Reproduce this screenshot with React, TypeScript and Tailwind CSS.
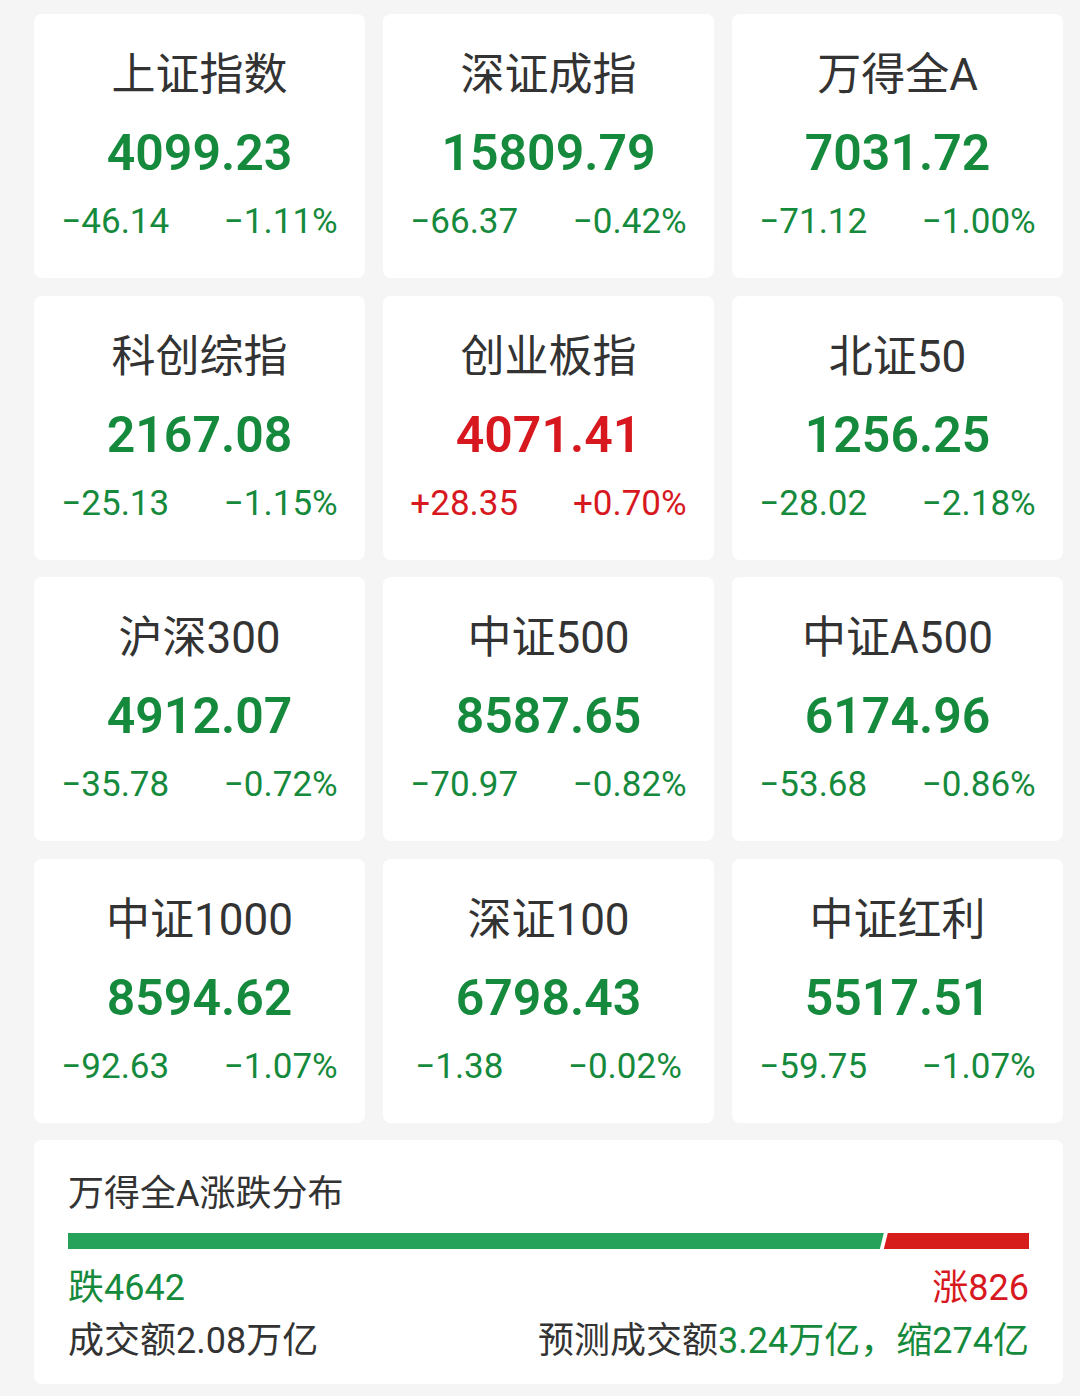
import React from "react";

type Index = { name: string; value: string; change: string; pct: string; up?: boolean };

const indices: Index[] = [
  { name: "上证指数", value: "4099.23", change: "−46.14", pct: "−1.11%" },
  { name: "深证成指", value: "15809.79", change: "−66.37", pct: "−0.42%" },
  { name: "万得全A", value: "7031.72", change: "−71.12", pct: "−1.00%" },
  { name: "科创综指", value: "2167.08", change: "−25.13", pct: "−1.15%" },
  { name: "创业板指", value: "4071.41", change: "+28.35", pct: "+0.70%", up: true },
  { name: "北证50", value: "1256.25", change: "−28.02", pct: "−2.18%" },
  { name: "沪深300", value: "4912.07", change: "−35.78", pct: "−0.72%" },
  { name: "中证500", value: "8587.65", change: "−70.97", pct: "−0.82%" },
  { name: "中证A500", value: "6174.96", change: "−53.68", pct: "−0.86%" },
  { name: "中证1000", value: "8594.62", change: "−92.63", pct: "−1.07%" },
  { name: "深证100", value: "6798.43", change: "−1.38", pct: "−0.02%" },
  { name: "中证红利", value: "5517.51", change: "−59.75", pct: "−1.07%" },
];

const IndexCard = ({ item }: { item: Index }) => {
  const color = item.up ? "text-[#d7191f]" : "text-[#168a3c]";
  return (
    <div className="bg-white rounded-[8px] h-[264px] flex flex-col items-center pt-[39px]">
      <h2 className="text-[44px] leading-[44px] text-[#333333]">{item.name}</h2>
      <p className={`text-[50px] leading-[56px] font-semibold mt-[28px] ${color}`}>
        {item.value}
      </p>
      <div className={`w-full flex justify-around text-[35px] leading-[40px] mt-[21px] ${color}`}>
        <span>{item.change}</span>
        <span>{item.pct}</span>
      </div>
    </div>
  );
};

const App = () => {
  return (
    <div
      className="w-[1080px] h-[1396px] bg-[#f5f5f5] pl-[34px] pr-[17px] pt-[14px]"
      style={{ fontFamily: '"Roboto", "Noto Sans CJK SC", sans-serif' }}>
      <div className="grid grid-cols-3 gap-x-[18px] gap-y-[17.5px]">
        {indices.map((it) => (
          <IndexCard key={it.name} item={it} />
        ))}
      </div>

      <section className="bg-white rounded-[8px] h-[244px] mt-[17.5px] px-[34px] pt-[35px]">
        <h3 className="text-[36px] leading-[38px] text-[#333333]">万得全A涨跌分布</h3>
        <div className="flex h-[16px] mt-[20px]">
          <div className="grow-[4642] bg-[#27a25a] [clip-path:polygon(0_0,100%_0,calc(100%-4px)_100%,0_100%)]" />
          <div className="grow-[826] bg-[#d71c1c] [clip-path:polygon(4px_0,100%_0,100%_100%,0_100%)]" />
        </div>
        <div className="flex justify-between text-[36px] leading-[40px] mt-[19px]">
          <span className="text-[#168a3c]">跌4642</span>
          <span className="text-[#d7191f]">涨826</span>
        </div>
        <div className="flex justify-between text-[36px] leading-[40px] mt-[13px] text-[#333333]">
          <span>成交额2.08万亿</span>
          <span>
            预测成交额<span className="text-[#168a3c]">3.24万亿，缩274亿</span>
          </span>
        </div>
      </section>
    </div>
  );
};

export default App;
